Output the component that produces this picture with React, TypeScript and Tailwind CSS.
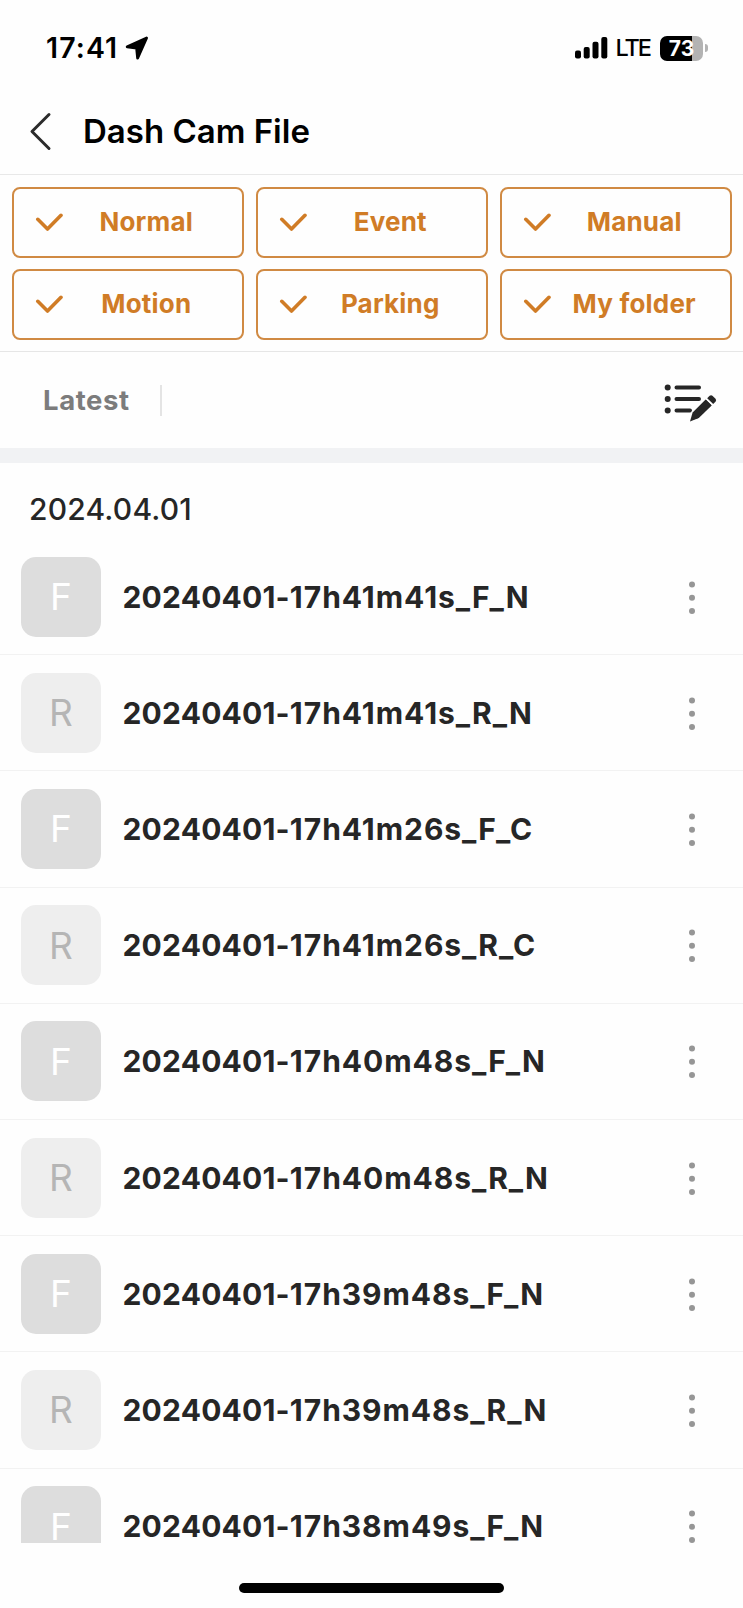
import React from 'react';

const filters = ['Normal', 'Event', 'Manual', 'Motion', 'Parking', 'My folder'];

const files = [
  { date: '20240401-', rest: '17h41m41s_F_N', cam: 'F' },
  { date: '20240401-', rest: '17h41m41s_R_N', cam: 'R' },
  { date: '20240401-', rest: '17h41m26s_F_C', cam: 'F' },
  { date: '20240401-', rest: '17h41m26s_R_C', cam: 'R' },
  { date: '20240401-', rest: '17h40m48s_F_N', cam: 'F' },
  { date: '20240401-', rest: '17h40m48s_R_N', cam: 'R' },
  { date: '20240401-', rest: '17h39m48s_F_N', cam: 'F' },
  { date: '20240401-', rest: '17h39m48s_R_N', cam: 'R' },
  { date: '20240401-', rest: '17h38m49s_F_N', cam: 'F' },
];

export default function App() {
  return (
    <div className="flex h-[1608px] w-[743px] flex-col overflow-hidden bg-[#fefefe] font-['Inter',sans-serif] text-[#262626]">
      <StatusBar />

      {/* Header */}
      <header className="flex h-[79px] shrink-0 items-center border-b-[1.5px] border-[#e8e8e8] pl-[29px] pb-[8px]">
        <svg className="h-[40px] w-[24px]" viewBox="0 0 24 40" fill="none" stroke="#2b2b2b" strokeWidth="3" strokeLinecap="round" strokeLinejoin="round">
          <path d="M20 3.5 3 20.5l17 17" />
        </svg>
        <h1 className="ml-[30px] text-[33px] leading-[40px] font-semibold text-black">Dash Cam File</h1>
      </header>

      {/* Filters */}
      <div className="grid h-[177px] shrink-0 grid-cols-3 content-start gap-x-[11.5px] gap-y-[11px] border-b-[1.5px] border-[#e6e6e6] pt-[12px] pr-[11px] pl-[11.5px]">
        {filters.map((label) => (
          <FilterButton key={label} label={label} />
        ))}
      </div>

      {/* Sort bar */}
      <div className="flex h-[96px] shrink-0 items-center pl-[43px] pr-[24px]">
        <span className="w-[117px] text-[27.5px] leading-[32px] font-bold tracking-[0.6px] text-[#7c7c7c]">Latest</span>
        <span className="h-[31px] w-[1.5px] bg-[#e4e4e4]" />
        <EditListIcon />
      </div>
      <div className="h-[15px] shrink-0 bg-[#f1f2f4]" />

      {/* File list */}
      <main className="h-[1080px] shrink-0 overflow-hidden">
        <div className="h-[76px] pt-[26px] pl-[29px] text-[30px] leading-[40px] font-medium tracking-[0.2px]">2024.04.01</div>
        {files.map((file) => (
          <FileRow key={file.rest} date={file.date} rest={file.rest} cam={file.cam} />
        ))}
      </main>

      <div className="mt-[40px] ml-[239px] h-[10px] w-[265px] shrink-0 rounded-full bg-black" />
    </div>
  );
}

function StatusBar() {
  return (
    <div className="flex h-[96px] shrink-0 items-center pl-[46px] pr-[35px] text-black">
      <span className="text-[28.5px] leading-[36px] font-semibold tracking-[1.1px]">17:41</span>
      <svg className="ml-[7px] h-[24px] w-[24px]" viewBox="0 0 24 24" strokeLinejoin="round">
        <path d="M21.6 2 2.2 10.8 11.6 12 12.6 22.2z" stroke="#000" strokeWidth="2.8" />
      </svg>
      <svg className="ml-auto h-[24px] w-[34px]" viewBox="0 0 34 24">
        <rect x="1" y="14.5" width="6" height="8" rx="2" />
        <rect x="9.7" y="11" width="6" height="11.5" rx="2" />
        <rect x="18.5" y="5.7" width="6" height="16.8" rx="2" />
        <rect x="27.3" y="1" width="6" height="21.5" rx="2" />
      </svg>
      <span className="ml-[7px] text-[23.5px] leading-[36px] font-medium tracking-[-2px]">LTE</span>
      <div className="ml-[10px] flex h-[25px] w-[43px] items-center justify-center rounded-[7px] bg-[linear-gradient(to_right,#000_32px,#b3b3b3_32px)] text-[21px] leading-none font-bold text-white">
        73
      </div>
      <span className="ml-[2px] h-[8px] w-[3px] rounded-r-full bg-[#b3b3b3]" />
    </div>
  );
}

function FilterButton({ label }: { label: string }) {
  return (
    <button className="flex h-[71px] items-center rounded-[8px] border-2 border-[#d08a43] pb-[2px] pl-[21.5px] pr-[12.5px] text-[#d07c26]">
      <svg className="h-[20px] w-[28px] shrink-0" viewBox="0 0 28 20" fill="none" stroke="currentColor" strokeWidth="3.6" strokeLinecap="round" strokeLinejoin="round">
        <path d="M2.8 7.3 12.5 17 26 3.3" />
      </svg>
      <span className="flex-1 text-center text-[26px] leading-[32px] font-bold tracking-[0.2px]">{label}</span>
    </button>
  );
}

function EditListIcon() {
  return (
    <svg className="mt-[6px] ml-auto h-[42px] w-[56px]" viewBox="0 0 56 42" fill="#262626">
      <circle cx="4.7" cy="5.5" r="3" />
      <circle cx="4.7" cy="17" r="3" />
      <circle cx="4.7" cy="28.5" r="3" />
      <path d="M13.5 5.5H36M13.5 17H36M13.5 28.5H27" stroke="#262626" strokeWidth="4" strokeLinecap="round" />
      <path d="M26.8 39.8 29.5 30 43 16.5 50 23.2 35.5 37z" stroke="#fefefe" strokeWidth="2" />
      <path d="M27 39.6 29.6 30.4 42.6 17.6 48.6 23.4 35.8 36z" />
      <path d="M44.2 16.2 46.6 13.8Q48.2 12.6 49.7 14L52.5 16.8Q53.8 18.3 52.5 19.8L50.2 22z" />
    </svg>
  );
}

function FileRow({ date, rest, cam }: { date: string; rest: string; cam: string }) {
  const tile = cam === 'F' ? 'bg-[#dddddd] text-white' : 'bg-[#eeeeee] text-[#b5b5b5]';

  return (
    <div className="flex h-[116.2px] items-center border-b-[1.5px] border-[#f2f2f2] pl-[21px] pr-[47px]">
      <div className={`flex h-[80px] w-[80px] shrink-0 items-center justify-center rounded-[15px] text-[37px] leading-none ${tile}`}>
        {cam}
      </div>
      <span className="ml-[21.5px] text-[30px] leading-[40px] font-bold tracking-[0.2px] whitespace-nowrap">
        {date}
        <span className="tracking-[0.95px]">{rest}</span>
      </span>
      <svg className="ml-auto h-[34px] w-[8px]" viewBox="0 0 8 34" fill="#969696">
        <circle cx="4" cy="4.5" r="3" />
        <circle cx="4" cy="17.8" r="3" />
        <circle cx="4" cy="31" r="3" />
      </svg>
    </div>
  );
}
